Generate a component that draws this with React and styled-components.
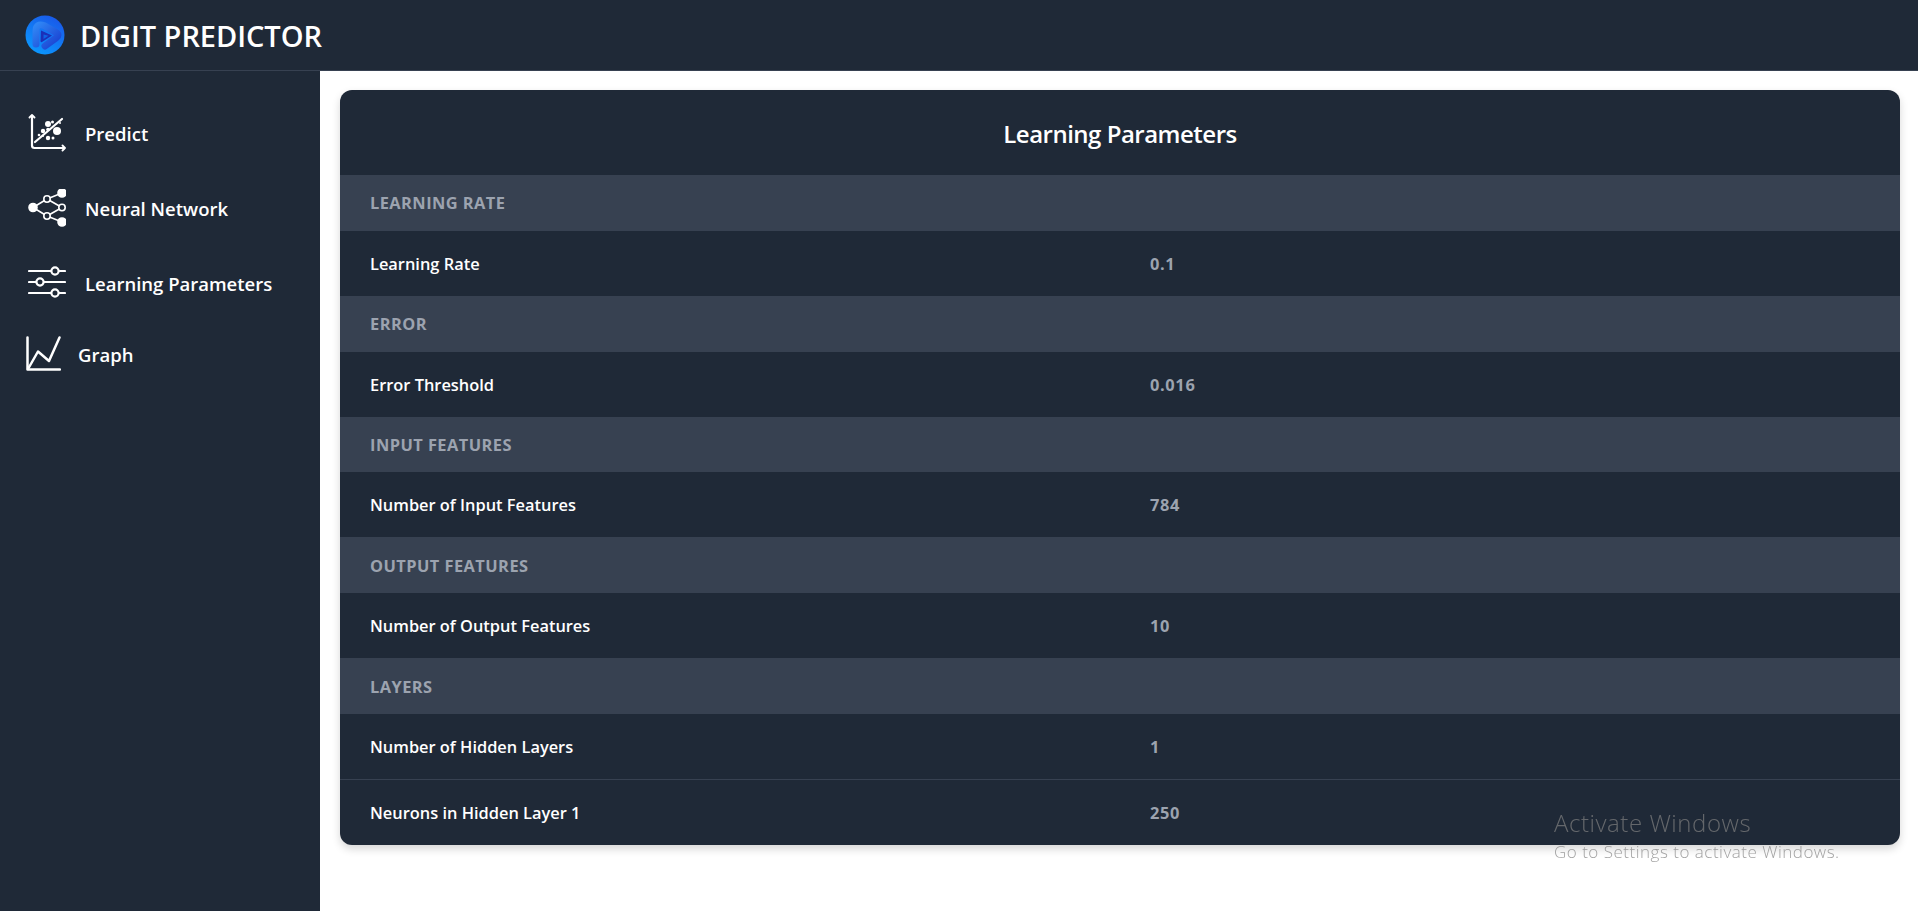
import React from 'react'
import styled, { createGlobalStyle } from 'styled-components'

const GlobalStyle = createGlobalStyle`
  html, body {
    margin: 0;
    padding: 0;
    background: #fff;
    font-family: "Open Sans", "Noto Sans", sans-serif;
  }
  * { box-sizing: border-box; }
`

const Page = styled.div`
  height: 911px;
  display: flex;
  flex-direction: column;
  overflow: hidden;
`

const Header = styled.header`
  height: 71px;
  flex: none;
  display: flex;
  align-items: center;
  gap: 15px;
  padding: 0 0 1px 25px;
  background: #1f2937;
  border-bottom: 1px solid #374151;
`

const Brand = styled.h1`
  margin: 0;
  padding-top: 2px;
  font-size: 29px;
  font-weight: 600;
  letter-spacing: -0.05px;
  color: #fff;
`

const Body = styled.div`
  flex: 1;
  display: flex;
`

const Sidebar = styled.nav`
  width: 320px;
  flex: none;
  padding: 25px 0 0 28px;
  background: #1f2937;
`

const NavItem = styled.a`
  height: ${p => (p.$compact ? '66px' : '75px')};
  display: flex;
  align-items: center;
  gap: ${p => (p.$compact ? '17px' : '19px')};
  margin-left: ${p => (p.$compact ? '-2px' : '0')};
  font-size: 18.5px;
  font-weight: 600;
  color: #fff;
`

const IconSlot = styled.span`
  width: ${p => (p.$compact ? '35px' : '38px')};
  height: 40px;
  flex: none;
  display: flex;
  align-items: center;
  justify-content: center;
`

const Main = styled.main`
  flex: 1;
  padding: 19px 18px 0 20px;
`

const Card = styled.section`
  height: 755px;
  border-radius: 12px;
  overflow: hidden;
  background: #1f2937;
  box-shadow: 0 4px 8px rgba(0, 0, 0, 0.16);
`

const CardTitle = styled.h2`
  height: 85px;
  padding-top: 1px;
  margin: 0;
  display: flex;
  align-items: center;
  justify-content: center;
  font-size: 24px;
  font-weight: 600;
  letter-spacing: -0.5px;
  color: #fff;
`

const SectionRow = styled.div`
  height: 55.8px;
  display: flex;
  align-items: center;
  padding-left: 30px;
  background: #374151;
  font-size: 16.4px;
  font-weight: 700;
  letter-spacing: 0.45px;
  color: #9ca3af;
`

const DataRow = styled.div`
  height: ${p => (p.$divided ? '66px' : '65px')};
  display: grid;
  grid-template-columns: 1fr 1fr;
  align-items: center;
  border-bottom: ${p => (p.$divided ? '1px solid #374151' : 'none')};
`

const Label = styled.span`
  padding-left: 30px;
  font-size: 16.4px;
  font-weight: 600;
  color: #fff;
`

const Value = styled.span`
  padding-left: 30px;
  font-size: 16.4px;
  font-weight: 700;
  letter-spacing: 0.65px;
  color: #9ca3af;
`

const Watermark = styled.div`
  position: fixed;
  left: 1554px;
  top: 806px;
  color: rgba(128, 128, 128, 0.72);
  font-weight: 300;
  pointer-events: none;
`

const WatermarkTitle = styled.div`
  font-size: 24px;
  line-height: 34px;
  letter-spacing: 0.55px;
`

const WatermarkText = styled.div`
  font-size: 17px;
  line-height: 24px;
  letter-spacing: 0.5px;
`

const Logo = () => (
  <svg width="40" height="40" viewBox="0 0 40 40">
    <defs>
      <linearGradient id="logoBg" x1="0.2" y1="1" x2="0.8" y2="0">
        <stop offset="0" stopColor="#0a9bff" />
        <stop offset="1" stopColor="#1a56e8" />
      </linearGradient>
      <linearGradient id="logoBand" x1="0" y1="0" x2="1" y2="1">
        <stop offset="0" stopColor="#2f86f5" />
        <stop offset="1" stopColor="#1a3fd0" />
      </linearGradient>
    </defs>
    <circle cx="20" cy="20" r="19.5" fill="url(#logoBg)" />
    <path
      d="M11 29V16Q11 8 19 10.500L31 17.500Q35 20 31 23L20 31"
      fill="none"
      stroke="url(#logoBand)"
      strokeWidth="7"
      strokeLinecap="round"
      strokeLinejoin="round"
    />
    <path d="M16 15.500L27 20.500L17 27Q15.500 27.500 15.500 26Z" fill="#1b2fb8" />
    <path d="M18.500 19.500L23.500 20.800L18.500 24Z" fill="#0f63e6" />
  </svg>
)

const PredictIcon = () => (
  <svg width="38" height="40" viewBox="0 0 38 40" fill="none" stroke="#fff" strokeLinecap="round" strokeLinejoin="round">
    <path d="M4 2v29.500c0 1.500 1 2.500 2.500 2.500H36" strokeWidth="2.200" />
    <path d="M1.500 3.500L4 1l2.500 2.500M34.500 31.500L37 34l-2.500 2.500" strokeWidth="1.800" />
    <path d="M7 28L34 5" strokeWidth="2.200" />
    <g fill="#fff" stroke="none">
      <circle cx="29" cy="17" r="4" />
      <circle cx="20" cy="10" r="3" />
      <circle cx="24.500" cy="8" r="1.500" />
      <circle cx="15" cy="17" r="2.200" />
      <circle cx="20" cy="15.500" r="1.800" />
      <circle cx="20" cy="24" r="2.200" />
      <circle cx="25" cy="24" r="1.500" />
      <circle cx="11" cy="21" r="1.300" />
      <circle cx="15" cy="22" r="1" />
      <circle cx="32" cy="9" r="1" />
    </g>
  </svg>
)

const NetworkIcon = () => (
  <svg width="38" height="40" viewBox="0 0 38 40" fill="none" stroke="#fff" strokeWidth="1.600">
    <path d="M5 18.500L19 10M5 18.500L19 27M19 10L34 4M19 27L34 33M19 10L34 18.500M19 27L34 18.500" />
    <circle cx="5" cy="18.500" r="4" fill="#fff" />
    <circle cx="19" cy="10" r="3.200" fill="#1f2937" />
    <circle cx="19" cy="27" r="3.200" fill="#1f2937" />
    <circle cx="34" cy="18.500" r="3.200" fill="#1f2937" />
    <circle cx="34" cy="4" r="4" fill="#fff" />
    <circle cx="34" cy="33" r="4" fill="#fff" />
  </svg>
)

const SlidersIcon = () => (
  <svg width="38" height="40" viewBox="0 0 38 40" fill="none" stroke="#fff" strokeWidth="2.200" strokeLinecap="round">
    <path d="M1 7h36M1 18h36M1 29h36" />
    <circle cx="27" cy="7" r="3.600" fill="#1f2937" />
    <circle cx="12" cy="18" r="3.600" fill="#1f2937" />
    <circle cx="27" cy="29" r="3.600" fill="#1f2937" />
  </svg>
)

const GraphIcon = () => (
  <svg width="35" height="36" viewBox="0 0 35 36" fill="none" stroke="#fff" strokeWidth="2.500" strokeLinecap="round" strokeLinejoin="round">
    <path d="M1.500 1.500V33.500H34" />
    <path d="M2 33L12 15.500L23 25L33.500 1.500" />
  </svg>
)

const navItems = [
  { label: 'Predict', icon: <PredictIcon /> },
  { label: 'Neural Network', icon: <NetworkIcon /> },
  { label: 'Learning Parameters', icon: <SlidersIcon /> },
  { label: 'Graph', icon: <GraphIcon />, compact: true },
]

const sections = [
  { title: 'LEARNING RATE', rows: [['Learning Rate', '0.1']] },
  { title: 'ERROR', rows: [['Error Threshold', '0.016']] },
  { title: 'INPUT FEATURES', rows: [['Number of Input Features', '784']] },
  { title: 'OUTPUT FEATURES', rows: [['Number of Output Features', '10']] },
  { title: 'LAYERS', rows: [['Number of Hidden Layers', '1'], ['Neurons in Hidden Layer 1', '250']] },
]

export default function App() {
  return (
    <Page>
      <GlobalStyle />
      <Header>
        <Logo />
        <Brand>DIGIT PREDICTOR</Brand>
      </Header>
      <Body>
        <Sidebar>
          {navItems.map((item) => (
            <NavItem key={item.label} $compact={item.compact}>
              <IconSlot $compact={item.compact}>{item.icon}</IconSlot>
              {item.label}
            </NavItem>
          ))}
        </Sidebar>
        <Main>
          <Card>
            <CardTitle>Learning Parameters</CardTitle>
            {sections.map((section) => (
              <div key={section.title}>
                <SectionRow>{section.title}</SectionRow>
                {section.rows.map((row, i) => (
                  <DataRow key={row[0]} $divided={i < section.rows.length - 1}>
                    <Label>{row[0]}</Label>
                    <Value>{row[1]}</Value>
                  </DataRow>
                ))}
              </div>
            ))}
          </Card>
        </Main>
      </Body>
      <Watermark>
        <WatermarkTitle>Activate Windows</WatermarkTitle>
        <WatermarkText>Go to Settings to activate Windows.</WatermarkText>
      </Watermark>
    </Page>
  )
}
